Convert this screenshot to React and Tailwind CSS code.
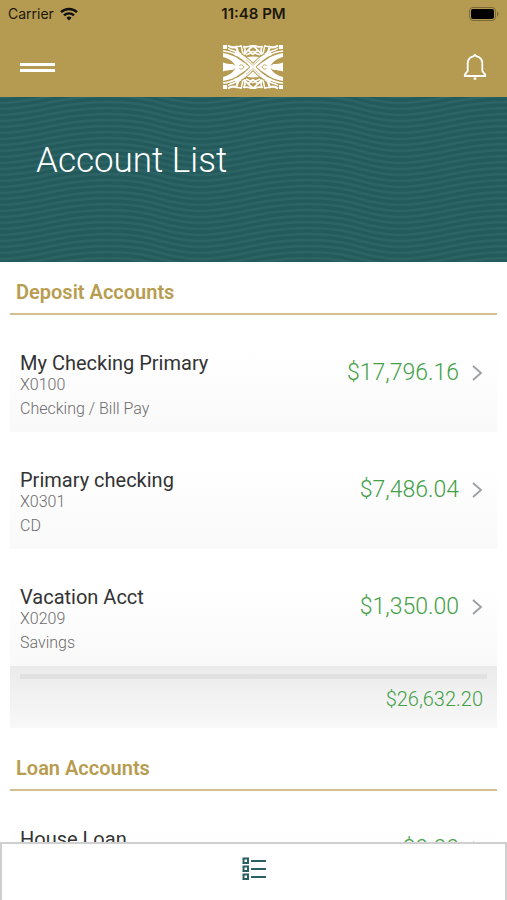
const deposits = [
  { name: 'My Checking Primary', number: 'X0100', type: 'Checking / Bill Pay', balance: '$17,796.16' },
  { name: 'Primary checking', number: 'X0301', type: 'CD', balance: '$7,486.04' },
  { name: 'Vacation Acct', number: 'X0209', type: 'Savings', balance: '$1,350.00' },
]

const loans = [{ name: 'House Loan', balance: '$0.00' }]

const waveRows = [-18, -12, -6, 0, 6, 12, 18, 24]

function WifiIcon() {
  return (
    <svg width="18" height="14" viewBox="0 0 18 14" fill="none" stroke="#111" strokeWidth="2.4" aria-hidden="true">
      <path d="M1 5.2a11.5 11.5 0 0 1 16 0" />
      <path d="M4 8.4a7.2 7.2 0 0 1 10 0" />
      <path d="M6.4 10.8a3.8 3.8 0 0 1 5.2 0L9 13.6z" fill="#111" stroke="none" />
    </svg>
  )
}

function BatteryIcon() {
  return (
    <svg width="30" height="14" viewBox="0 0 30 14" aria-hidden="true">
      <rect x="0.5" y="0.5" width="26" height="13" rx="3.5" fill="none" stroke="#7d6936" />
      <rect x="2" y="2" width="23" height="10" rx="2" fill="#000" />
      <path d="M28 4.5c2 .6 2 4.4 0 5z" fill="#7d6936" />
    </svg>
  )
}

function BellIcon() {
  return (
    <svg width="24" height="28" viewBox="0 0 24 28" fill="none" stroke="#fff" strokeWidth="1.8" strokeLinejoin="round" aria-hidden="true">
      <path d="M12 1.8l-1.7 1.6C6.6 4.3 4.7 7 4.7 10.5V18l-2.9 3.6V23h20.4v-1.4L19.3 18v-7.5c0-3.5-1.9-6.2-5.6-7.1z" />
      <path d="M10.6 25.6h2.800" strokeWidth="2.2" />
    </svg>
  )
}

// one quarter of the emblem, mirrored into the other three
function Logo() {
  return (
    <svg width="60" height="44" viewBox="0 0 60 44" role="img" aria-label="Bank logo">
      <defs>
        <g id="quarter">
          <g fill="#fff">
            <path d="M0 0h4v4H0z" />
            <path d="M0 8C6 9 12 11 17 15l6 4-3.500 3H13C11.500 18 7 13.500 0 12z" />
            <path d="M0 17.5c3 1 6 1.500 9.500 1.500l5 3H0z" />
            <path d="M12 7C19 8.500 25 13.500 30 19v3h-2.500C23 17 18 13 11 9.500z" />
            <path d="M30 11.500v6L24 12z" />
            <path d="M22 18.500l4.500 3.500H21l-2-1z" />
          </g>
          <g fill="none" stroke="#fff" strokeWidth="1.500">
            <path d="M0 6C6 6.300 10 8 14 10.500" />
            <path d="M5 3.500C9 6.500 14 6 18 9" />
            <path d="M5 .5c2.500 2 5 2.500 8 1.500 1.500 2 1.200 4 2.500 6" strokeWidth="2.200" />
            <path d="M13 1.500c2 0 3.500.5 5-.8 1.500 2.500.5 5.500 2.500 8.300" strokeWidth="1.500" />
            <path d="M20.500 1c2.500 2.500 1 5.500 1 8.500 1.500-3 4-5 8.500-8.500" strokeWidth="1.700" />
            <path d="M21 1.500c3 1 6 0 9-1.500" strokeWidth="1.700" />
            <path d="M23 10c2-1 4-1 7-4M25.500 5.500l4.500 4" strokeWidth="1.700" />
          </g>
          <path d="M16.500 20.500c1.500-1 3-1 4.500 1.500" fill="none" stroke="#b59b52" strokeWidth=".9" />
          <path d="M23 14.500l7 6" fill="none" stroke="#b59b52" strokeWidth=".6" />
        </g>
      </defs>
      <use href="#quarter" />
      <use href="#quarter" transform="matrix(-1 0 0 1 60 0)" />
      <use href="#quarter" transform="matrix(1 0 0 -1 0 44)" />
      <use href="#quarter" transform="matrix(-1 0 0 -1 60 44)" />
    </svg>
  )
}

function ListIcon() {
  return (
    <svg width="24" height="24" viewBox="0 0 24 24" fill="none" stroke="#285f62" strokeWidth="2" aria-hidden="true">
      {[0, 8, 16].map((y) => (
        <g key={y}>
          <rect x="1.5" y={y + 1.5} width="4.5" height="4.5" />
          <path d={`M9 ${y + 4}h15`} />
        </g>
      ))}
    </svg>
  )
}

function Waves() {
  return (
    <svg className="absolute inset-0 h-full w-full" aria-hidden="true">
      <defs>
        <pattern id="waves" width="200" height="6" patternUnits="userSpaceOnUse">
          {waveRows.map((y) => (
            <path
              key={y}
              d={`M0 ${y}C35 ${y} 60 ${y - 13} 108 ${y - 13}S165 ${y} 200 ${y}`}
              fill="none"
              stroke="#3a7070"
              strokeWidth="2.5"
              strokeOpacity=".4"
            />
          ))}
        </pattern>
      </defs>
      <rect width="100%" height="100%" fill="url(#waves)" />
    </svg>
  )
}

function SectionTitle({ children }) {
  return (
    <h2 className="flex h-[53px] items-center border-b-2 border-[#d3c08d] px-1.5 pt-2 text-xl leading-6 font-semibold text-[#b89c50]">
      {children}
    </h2>
  )
}

function AccountRow({ account }) {
  return (
    <li>
      <button className="flex h-[117px] w-full items-start justify-between bg-linear-to-b from-white from-30% to-[#f9f9f9] px-2.5 pt-9 text-left">
        <span className="flex flex-col text-base font-light text-[#6c6c6c]">
          <span className="text-xl leading-6 font-normal text-[#333]">{account.name}</span>
          {account.number && <span className="leading-5">{account.number}</span>}
          {account.type && <span className="leading-7">{account.type}</span>}
        </span>
        <span className="flex items-center gap-3 pt-1.5 pr-1 text-[23px] leading-8 font-light text-[#43a047]">
          {account.balance}
          <svg width="12" height="18" viewBox="0 0 12 18" fill="none" stroke="#999fa2" strokeWidth="1.8" aria-hidden="true">
            <path d="M2 2l8 7-8 7" />
          </svg>
        </span>
      </button>
    </li>
  )
}

export default function App() {
  return (
    <div className="flex h-screen flex-col overflow-hidden bg-white font-['Roboto',sans-serif]">
      <header className="h-[97px] shrink-0 bg-[#b59b52]">
        <div className="grid h-7 grid-cols-3 items-center px-2 font-['Inter',sans-serif] text-sm text-[#1c180c]">
          <div className="flex items-center gap-1.5">
            <span>Carrier</span>
            <WifiIcon />
          </div>
          <span className="text-center text-[15px] font-semibold">11:48 PM</span>
          <div className="flex justify-end">
            <BatteryIcon />
          </div>
        </div>
        <div className="grid grid-cols-3 items-center px-5 pt-[17px]">
          <button aria-label="Menu" className="flex w-[35px] flex-col gap-[3px]">
            <span className="h-[3px] w-full bg-white"></span>
            <span className="h-[3px] w-full bg-white"></span>
          </button>
          <div className="flex justify-center">
            <Logo />
          </div>
          <button aria-label="Notifications" className="justify-self-end">
            <BellIcon />
          </button>
        </div>
      </header>

      <div className="relative h-[165px] shrink-0 bg-[#235a5c] px-9 pt-10">
        <Waves />
        <h1 className="relative text-[35px] leading-12 font-light text-white">Account List</h1>
      </div>

      <main className="min-h-0 flex-1 overflow-hidden px-2.5">
        <section>
          <SectionTitle>Deposit Accounts</SectionTitle>
          <ul>
            {deposits.map((account) => (
              <AccountRow key={account.name} account={account} />
            ))}
          </ul>
          <div className="h-[62px] bg-linear-to-b from-[#ebebeb] to-[#f8f8f8] px-2.5 pt-2">
            <div className="h-[5px] bg-[#e1e1e1]"></div>
            <p className="pt-1 pr-1 text-right text-xl leading-8 font-light text-[#43a047]">$26,632.20</p>
          </div>
        </section>

        <section className="pt-2.5">
          <SectionTitle>Loan Accounts</SectionTitle>
          <ul>
            {loans.map((account) => (
              <AccountRow key={account.name} account={account} />
            ))}
          </ul>
        </section>
      </main>

      <nav className="flex h-[58px] shrink-0 justify-center border-2 border-b-0 border-[#cfcfcf] bg-white pt-[13px]">
        <button aria-label="Accounts" className="self-start">
          <ListIcon />
        </button>
      </nav>
    </div>
  )
}
